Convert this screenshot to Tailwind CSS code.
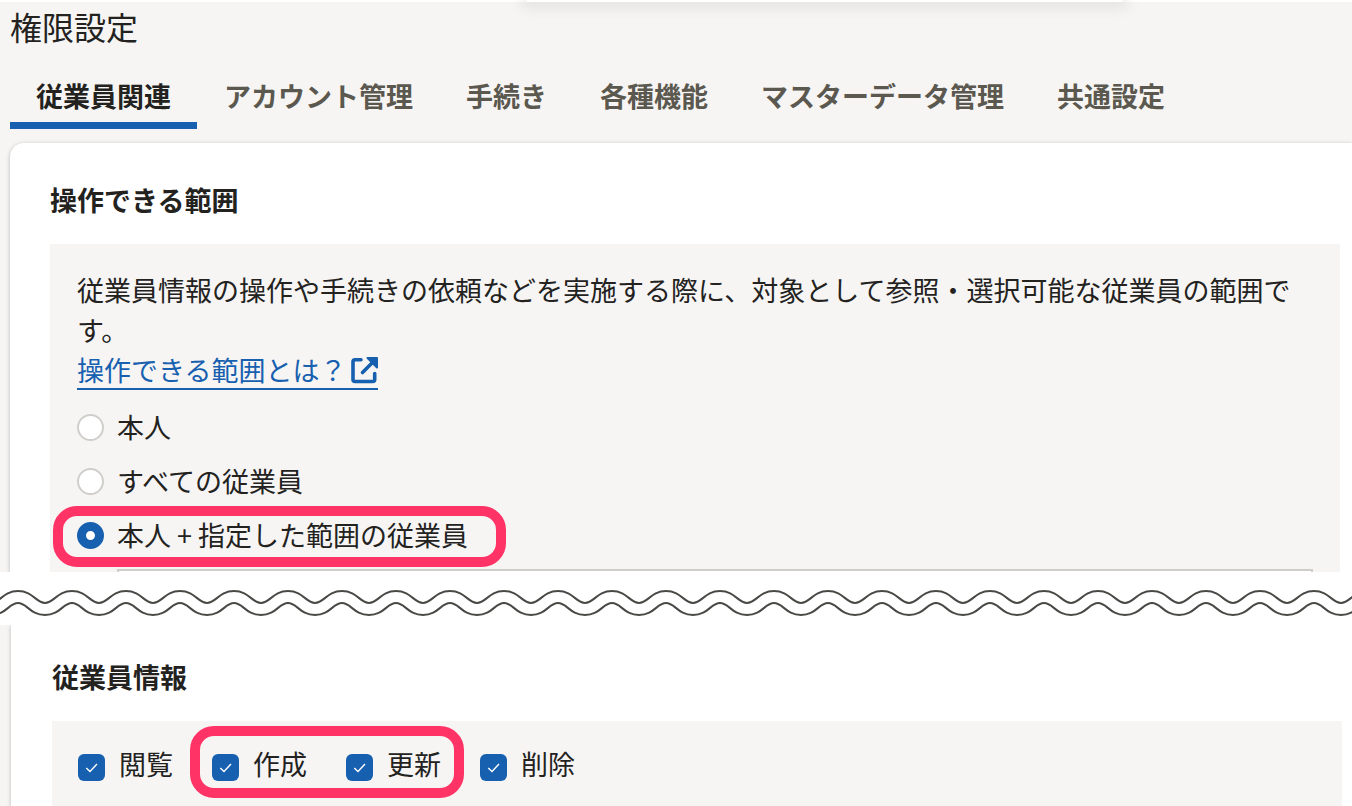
<!DOCTYPE html>
<html lang="ja">
<head>
  <meta charset="UTF-8">
  <meta name="viewport" content="width=device-width, initial-scale=1.0">
  <title>権限設定</title>
  <script src="https://cdn.jsdelivr.net/npm/@tailwindcss/browser@4"></script>
</head>
<body class="min-h-screen flex flex-col overflow-hidden bg-white text-[#23221e] text-[27px] leading-10 font-['Noto_Sans_CJK_JP',sans-serif]">

  <!-- TOP BAR -->
  <div class="relative z-10 h-0.5 bg-white">
    <div class="h-0.5 ml-[39%] mr-[17%] bg-white shadow-[0_0_14px_6px_rgba(0,0,0,0.08)]"></div>
  </div>

  <!-- UPPER PART -->
  <main class="bg-[#f6f5f3] pl-2.5 overflow-hidden">
    <h1 class="text-[32px] leading-12">権限設定</h1>

    <nav class="mt-5 flex gap-px whitespace-nowrap font-bold leading-[52px] text-[#5b584f]">
      <button type="button" class="px-[26px] border-b-7 border-[#1760b0] text-[#23221e]">従業員関連</button>
      <button type="button" class="px-[26px] border-b-7 border-transparent">アカウント管理</button>
      <button type="button" class="px-[26px] border-b-7 border-transparent">手続き</button>
      <button type="button" class="px-[26px] border-b-7 border-transparent">各種機能</button>
      <button type="button" class="px-[26px] border-b-7 border-transparent">マスターデータ管理</button>
      <button type="button" class="px-[26px] border-b-7 border-transparent">共通設定</button>
    </nav>

    <section class="mt-3.5 pt-[37px] pl-10 pr-3 bg-white rounded-tl-[14px] shadow-[0_1px_4px_rgba(0,0,0,0.25)]">
      <h2 class="font-bold">操作できる範囲</h2>

      <div class="mt-6 pt-[26px] px-[27px] bg-[#f6f5f3]">
        <p>従業員情報の操作や手続きの依頼などを実施する際に、対象として参照・選択可能な従業員の範囲です。</p>
        <div class="h-10">
          <a href="#" class="inline-flex items-center gap-1 h-[38px] leading-[38px] border-b-2 border-[#1760b0] text-[#1760b0]">
            操作できる範囲とは？
            <svg class="size-7" viewBox="0 0 28 28" fill="none" stroke="currentColor" stroke-width="3.6" stroke-linecap="round" stroke-linejoin="round" aria-hidden="true">
              <path d="M11 3.8H5Q3 3.8 3 5.8V23.5Q3 25.5 5 25.5H22.7Q24.7 25.5 24.7 23.5V17.5"/>
              <path d="M12.5 16.5L22 7"/>
              <path d="M17.5 2H27V11.5Z" fill="currentColor" stroke-width="2"/>
            </svg>
          </a>
        </div>

        <div class="mt-[17px] flex flex-col items-start gap-3.5">
          <label class="flex items-center gap-[13px]">
            <input type="radio" name="scope" class="appearance-none size-[27px] rounded-full bg-white border-2 border-[#d0cecb] checked:border-9 checked:border-[#1760b0]">
            本人
          </label>
          <label class="flex items-center gap-[13px]">
            <input type="radio" name="scope" class="appearance-none size-[27px] rounded-full bg-white border-2 border-[#d0cecb] checked:border-9 checked:border-[#1760b0]">
            すべての従業員
          </label>
          <label class="relative flex items-center gap-[13px]">
            <input type="radio" name="scope" checked class="appearance-none size-[27px] rounded-full bg-white border-2 border-[#d0cecb] checked:border-9 checked:border-[#1760b0]">
            本人 + 指定した範囲の従業員
            <span class="absolute -top-[9px] -bottom-3 -left-6 -right-[38px] border-10 border-[#ff3366] rounded-3xl pointer-events-none"></span>
          </label>
        </div>

        <div class="mt-3.5 ml-10 h-[3px] bg-white border-2 border-b-0 border-[#cfcdc9]"></div>
      </div>
    </section>
  </main>

  <!-- WAVY BREAK -->
  <svg class="w-full h-[53px] shrink-0 bg-white" aria-hidden="true">
    <defs>
      <pattern id="wave" width="54" height="53" patternUnits="userSpaceOnUse" patternTransform="translate(-9 0)">
        <g fill="none" stroke="#4b4946" stroke-width="2">
          <path d="M-27 19C-12 19 -9 31 0 31C9 31 12 19 27 19C42 19 45 31 54 31C63 31 66 19 81 19"/>
          <path d="M-27 31C-18 31 -15 43 0 43C15 43 18 31 27 31C36 31 39 43 54 43C69 43 72 31 81 31"/>
        </g>
      </pattern>
    </defs>
    <rect width="100%" height="100%" fill="url(#wave)"/>
  </svg>

  <!-- LOWER PART -->
  <div class="flex-1 flex flex-col bg-[#f6f5f3] pl-[11px] overflow-hidden">
    <section class="flex-1 flex flex-col pt-8 pl-[41px] pr-2.5 bg-white shadow-[0_1px_4px_rgba(0,0,0,0.25)]">
      <h2 class="font-bold">従業員情報</h2>

      <div class="flex-1 mt-6 pt-[23px] px-[26px] pb-5 bg-[#f6f5f3]">
        <div class="flex gap-[39px]">
          <label class="flex items-center gap-3.5">
            <span class="grid place-items-center pt-1.5">
              <input type="checkbox" checked class="[grid-area:1/1] appearance-none size-[27px] rounded-md bg-[#1760b0]">
              <svg class="[grid-area:1/1] size-[27px] pointer-events-none" viewBox="0 0 27 27" fill="none" stroke="#fff" stroke-width="1.4" aria-hidden="true"><path d="M8.3 14L12 17.5L19 10"/></svg>
            </span>
            閲覧
          </label>
          <div class="relative flex gap-[39px]">
            <label class="flex items-center gap-3.5">
              <span class="grid place-items-center pt-1.5">
                <input type="checkbox" checked class="[grid-area:1/1] appearance-none size-[27px] rounded-md bg-[#1760b0]">
                <svg class="[grid-area:1/1] size-[27px] pointer-events-none" viewBox="0 0 27 27" fill="none" stroke="#fff" stroke-width="1.4" aria-hidden="true"><path d="M8.3 14L12 17.5L19 10"/></svg>
              </span>
              作成
            </label>
            <label class="flex items-center gap-3.5">
              <span class="grid place-items-center pt-1.5">
                <input type="checkbox" checked class="[grid-area:1/1] appearance-none size-[27px] rounded-md bg-[#1760b0]">
                <svg class="[grid-area:1/1] size-[27px] pointer-events-none" viewBox="0 0 27 27" fill="none" stroke="#fff" stroke-width="1.4" aria-hidden="true"><path d="M8.3 14L12 17.5L19 10"/></svg>
              </span>
              更新
            </label>
            <span class="absolute -top-[18px] -bottom-3.5 -left-[22px] -right-[23px] border-10 border-[#ff3366] rounded-3xl pointer-events-none"></span>
          </div>
          <label class="flex items-center gap-3.5">
            <span class="grid place-items-center pt-1.5">
              <input type="checkbox" checked class="[grid-area:1/1] appearance-none size-[27px] rounded-md bg-[#1760b0]">
              <svg class="[grid-area:1/1] size-[27px] pointer-events-none" viewBox="0 0 27 27" fill="none" stroke="#fff" stroke-width="1.4" aria-hidden="true"><path d="M8.3 14L12 17.5L19 10"/></svg>
            </span>
            削除
          </label>
        </div>
      </div>
    </section>
  </div>

</body>
</html>
